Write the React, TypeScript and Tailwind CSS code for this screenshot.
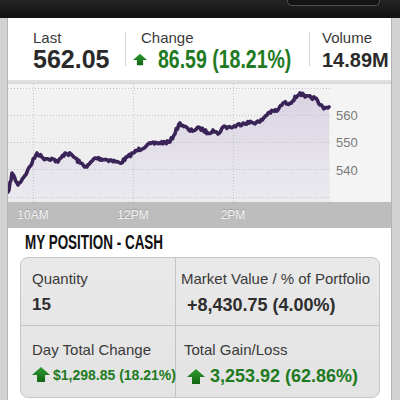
import React from 'react';

const keys: [number, number][] = [
  [8, 192], [9, 190], [12, 173], [18, 185], [27, 172], [37, 153], [43, 158], [53, 159], [58, 162],
  [65, 153], [72, 155], [80, 163], [87, 167], [95, 158], [110, 160], [120, 163], [133, 153],
  [147, 145], [157, 143], [170, 142], [180, 123], [190, 131], [200, 128], [208, 133], [213, 130],
  [218, 134], [223, 127], [233, 127], [243, 123], [260, 122], [268, 113], [278, 110], [283, 103],
  [290, 103], [300, 93], [305, 97], [315, 98], [320, 105], [325, 108], [329, 107],
];

function buildLine() {
  let seed = 7;
  const rnd = () => {
    seed = (seed * 16807) % 2147483647;
    return seed / 2147483647 - 0.5;
  };
  const pts: [number, number][] = [];
  for (let i = 0; i < keys.length - 1; i++) {
    const [x0, y0] = keys[i];
    const [x1, y1] = keys[i + 1];
    const steps = Math.max(1, Math.round((x1 - x0) / 1.2));
    for (let s = 0; s < steps; s++) {
      const t = s / steps;
      pts.push([x0 + (x1 - x0) * t - 8, y0 + (y1 - y0) * t - 84 + (s === 0 ? 0 : rnd() * 3.4)]);
    }
  }
  const last = keys[keys.length - 1];
  pts.push([last[0] - 8, last[1] - 84]);
  return pts;
}

const pts = buildLine();
const linePath = pts.map((p, i) => `${i ? 'L' : 'M'}${p[0].toFixed(1)} ${p[1].toFixed(1)}`).join(' ');
const fillPath = `${linePath} L${pts[pts.length - 1][0].toFixed(1)} 118 L0 118 Z`;

function UpArrow({ className }: { className?: string }) {
  return (
    <svg viewBox="0 0 18 15" className={className}>
      <defs>
        <linearGradient id="ag" x1="0" y1="0" x2="0" y2="1">
          <stop offset="0" stopColor="#2f9a2f" />
          <stop offset="1" stopColor="#136613" />
        </linearGradient>
      </defs>
      <polygon points="9,0 18,8 13,8 13,15 5,15 5,8 0,8" fill="url(#ag)" />
    </svg>
  );
}

function Chart() {
  const hLines = [4, 31, 58, 85, 113];
  const vLines = [25, 125, 225];
  return (
    <div className="h-[118px] bg-gradient-to-b from-[#f3f3f4] to-[#ebebec]">
      <svg width="383" height="118" viewBox="0 0 383 118">
        <defs>
          <linearGradient id="fg" x1="0" y1="0" x2="0" y2="1">
            <stop offset="0" stopColor="#d9d3e2" />
            <stop offset="1" stopColor="#ecebf0" />
          </linearGradient>
        </defs>
        <rect x="322" y="0" width="61" height="118" fill="#f4f4f4" />
        <path d={fillPath} fill="url(#fg)" />
        {hLines.map((y) => (
          <line key={y} x1="0" x2="322" y1={y + 0.5} y2={y + 0.5} stroke="#c4c4c8" strokeDasharray="1 2" />
        ))}
        {vLines.map((x) => (
          <line key={x} x1={x + 0.5} x2={x + 0.5} y1="0" y2="118" stroke="#c4c4c8" strokeDasharray="1 2" />
        ))}
        <path d={linePath} fill="none" stroke="#3a2356" strokeWidth="3.6" strokeLinejoin="round" strokeLinecap="round" />
        {[['560', 31], ['550', 58], ['540', 86]].map(([t, y]) => (
          <text key={t} x="328" y={Number(y) + 5} fontSize="13" fill="#7a7a7a" fontFamily="Liberation Sans, Arial, sans-serif">
            {t}
          </text>
        ))}
      </svg>
    </div>
  );
}

export default function App() {
  return (
    <div className="w-[400px] h-[400px] overflow-hidden bg-[#d2d2d2] flex flex-col font-['Liberation_Sans',Arial,sans-serif]">
      <div className="h-[18px] shrink-0 bg-gradient-to-b from-[#242424] to-[#121212] flex justify-end pr-[20px]">
        <div className="w-[93px] h-[6px] rounded-b-[5px] border border-t-0 border-[#505050] bg-[#141414]" />
      </div>
      <div className="flex-1 ml-[7px] mr-[8px] bg-white border-x border-[#b4b4b4] flex flex-col overflow-hidden">
        <div className="h-[62px] shrink-0 flex">
          <div className="w-[117px] pl-[25px] pt-[12px]">
            <div className="text-[15px] leading-none text-[#3a3a3a]">Last</div>
            <div className="mt-[2px] text-[25px] leading-none font-bold text-[#2a2a2a]">562.05</div>
          </div>
          <div className="w-px bg-[#d4d4d4] my-[14px]" />
          <div className="w-[183px] pt-[12px]">
            <div className="pl-[15px] text-[15px] leading-none text-[#3a3a3a]">Change</div>
            <div className="mt-[2px] pl-[7px] flex items-center whitespace-nowrap">
              <UpArrow className="w-[14px] h-[13px] shrink-0" />
              <span className="ml-[11px] inline-block origin-left scale-x-[0.78] text-[25px] leading-none font-bold text-[#217a21]">
                86.59 (18.21%)
              </span>
            </div>
          </div>
          <div className="w-px bg-[#d4d4d4] my-[14px]" />
          <div className="flex-1 pl-[12px] pt-[12px]">
            <div className="text-[15px] leading-none text-[#3a3a3a]">Volume</div>
            <div className="mt-[5px] text-[20px] leading-none font-bold text-[#2a2a2a]">14.89M</div>
          </div>
        </div>
        <div className="h-[4px] shrink-0 bg-gradient-to-b from-[#e4e4e4] to-[#d6d6d6]" />
        <Chart />
        <div className="h-[26px] shrink-0 bg-[#bdbdbd] flex items-center text-[12px] text-[#f4f4f4] [text-shadow:0_-1px_0_#9a9a9a]">
          <span className="w-[50px] text-center">10AM</span>
          <span className="w-[50px] ml-[50px] text-center">12PM</span>
          <span className="w-[50px] ml-[50px] text-center">2PM</span>
        </div>
        <div className="h-[29px] shrink-0 pl-[17px] pt-[5px]">
          <div className="origin-left scale-x-[0.69] text-[19.5px] leading-none font-bold text-[#111] whitespace-nowrap">
            MY POSITION - CASH
          </div>
        </div>
        <div className="ml-[12px] mr-[11px] h-[141px] shrink-0 rounded-[8px] border border-[#c6c6c6] bg-gradient-to-b from-[#e9e9e9] to-[#e3e3e3] grid grid-cols-[155px_1fr] grid-rows-[68px_1fr] overflow-hidden">
          <div className="border-r border-b border-[#c4c4c4] pl-[11px] pt-[13px]">
            <div className="text-[15px] leading-none text-[#3a3a3a]">Quantity</div>
            <div className="mt-[10px] text-[17px] leading-none font-bold text-[#2e2e2e]">15</div>
          </div>
          <div className="border-b border-[#c4c4c4] pl-[5px] pt-[13px] whitespace-nowrap">
            <div className="text-[15px] leading-none text-[#3a3a3a]">Market Value / % of Portfolio</div>
            <div className="mt-[10px] pl-[6px] text-[18px] leading-none font-bold text-[#2e2e2e]">+8,430.75 (4.00%)</div>
          </div>
          <div className="border-r border-[#c4c4c4] pl-[11px] pt-[16px] whitespace-nowrap">
            <div className="text-[15px] leading-none text-[#3a3a3a]">Day Total Change</div>
            <div className="mt-[10px] flex items-center">
              <UpArrow className="w-[18px] h-[15px] shrink-0" />
              <span className="ml-[3px] text-[14px] leading-none font-bold text-[#217a21]">$1,298.85 (18.21%)</span>
            </div>
          </div>
          <div className="pl-[8px] pt-[16px] whitespace-nowrap">
            <div className="text-[15px] leading-none text-[#3a3a3a]">Total Gain/Loss</div>
            <div className="mt-[10px] pl-[3px] flex items-center">
              <UpArrow className="w-[18px] h-[15px] shrink-0" />
              <span className="ml-[5px] text-[18px] leading-none font-bold text-[#217a21]">3,253.92 (62.86%)</span>
            </div>
          </div>
        </div>
      </div>
    </div>
  );
}
